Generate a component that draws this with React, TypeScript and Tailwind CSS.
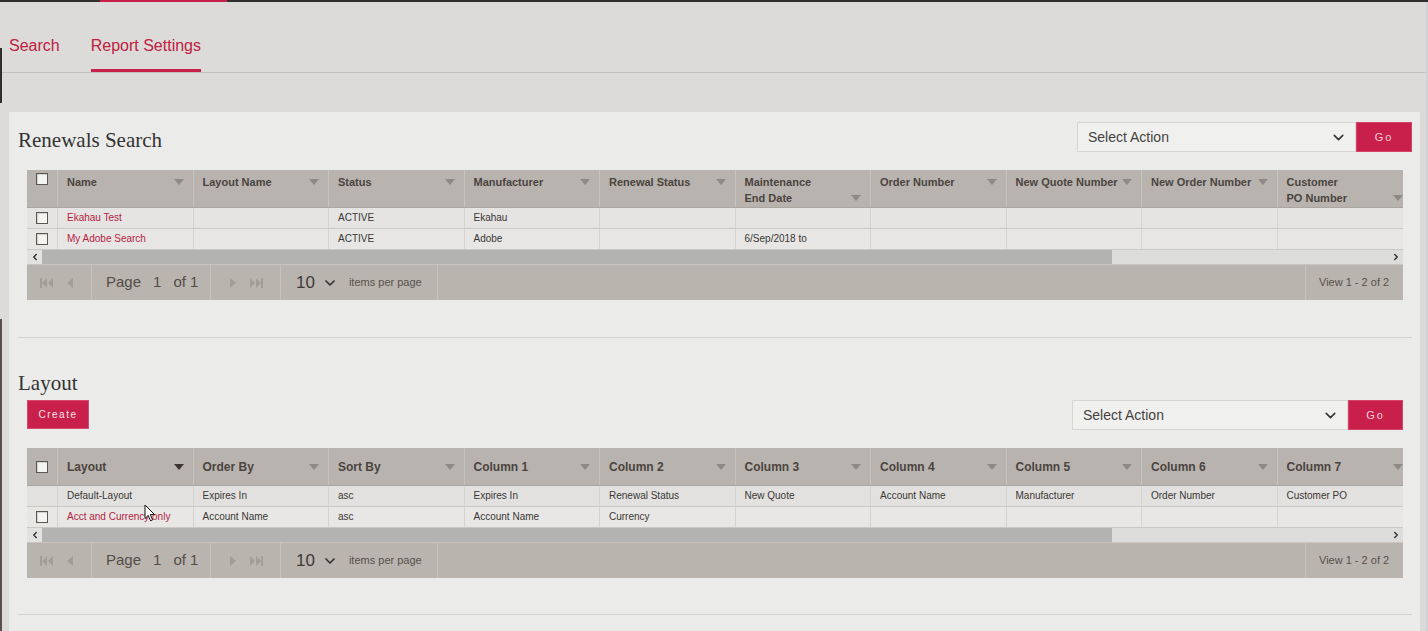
import React from "react";
import { ChevronDown, ChevronLeft, ChevronRight } from "lucide-react";

type Col = { label: string[]; dark?: boolean };

const t1Cols: Col[] = [
  { label: ["Name"] },
  { label: ["Layout Name"] },
  { label: ["Status"] },
  { label: ["Manufacturer"] },
  { label: ["Renewal Status"] },
  { label: ["Maintenance", "End Date"] },
  { label: ["Order Number"] },
  { label: ["New Quote Number"] },
  { label: ["New Order Number"] },
  { label: ["Customer", "PO Number"] },
];

type Row = { check: boolean; link: boolean; cells: string[]; bg: string; cursor?: boolean };

const t1Rows: Row[] = [
  { check: true, link: true, bg: "bg-[#e5e4e2]", cells: ["Ekahau Test", "", "ACTIVE", "Ekahau", "", "", "", "", "", ""] },
  { check: true, link: true, bg: "bg-[#e7e6e4]", cells: ["My Adobe Search", "", "ACTIVE", "Adobe", "", "6/Sep/2018 to", "", "", "", ""] },
];

const t2Cols: Col[] = [
  { label: ["Layout"], dark: true },
  { label: ["Order By"] },
  { label: ["Sort By"] },
  { label: ["Column 1"] },
  { label: ["Column 2"] },
  { label: ["Column 3"] },
  { label: ["Column 4"] },
  { label: ["Column 5"] },
  { label: ["Column 6"] },
  { label: ["Column 7"] },
];

const t2Rows: Row[] = [
  {
    check: false,
    link: false,
    bg: "bg-[#e2e1df]",
    cells: ["Default-Layout", "Expires In", "asc", "Expires In", "Renewal Status", "New Quote", "Account Name", "Manufacturer", "Order Number", "Customer PO"],
  },
  {
    check: true,
    link: true,
    cursor: true,
    bg: "bg-[#e8e7e5]",
    cells: ["Acct and Currency only", "Account Name", "asc", "Account Name", "Currency", "", "", "", "", ""],
  },
];

function Tri({ dark, center }: { dark?: boolean; center?: boolean }) {
  return (
    <svg width="10" height="6" viewBox="0 0 10 6" className={`shrink-0 ${center ? "" : "mb-[5px]"}`}>
      <path d="M0 0H10L5 6Z" fill={dark ? "#3b3431" : "#8e8984"} />
    </svg>
  );
}

function Check() {
  return <div className="w-[12px] h-[12px] bg-[#f4f4f3] border border-[#5b5753] shadow-[inset_1px_1px_1px_rgba(0,0,0,0.15)]" />;
}

function Cursor() {
  return (
    <svg width="12" height="18" viewBox="0 0 12 18" className="absolute left-[86px] top-[-3px] z-10">
      <path d="M1 1 L1 14.5 L4.2 11.4 L6.6 16.8 L8.6 15.9 L6.3 10.6 L10.6 10.6 Z" fill="#ffffff" stroke="#111111" strokeWidth="1" strokeLinejoin="round" />
    </svg>
  );
}

function FirstIcon() {
  return (
    <svg width="13" height="10" viewBox="0 0 13 10">
      <rect x="0" y="0" width="2" height="10" fill="#a29d97" />
      <path d="M7 0V10L2 5Z" fill="#a29d97" />
      <path d="M13 0V10L8 5Z" fill="#a29d97" />
    </svg>
  );
}
function LastIcon() {
  return (
    <svg width="13" height="10" viewBox="0 0 13 10">
      <path d="M0 0V10L5 5Z" fill="#a29d97" />
      <path d="M6 0V10L11 5Z" fill="#a29d97" />
      <rect x="11" y="0" width="2" height="10" fill="#a29d97" />
    </svg>
  );
}
function PrevIcon() {
  return (
    <svg width="6" height="10" viewBox="0 0 6 10">
      <path d="M6 0V10L0 5Z" fill="#a29d97" />
    </svg>
  );
}
function NextIcon() {
  return (
    <svg width="6" height="10" viewBox="0 0 6 10">
      <path d="M0 0V10L6 5Z" fill="#a29d97" />
    </svg>
  );
}

function Grid({ cols, rows, center }: { cols: Col[]; rows: Row[]; center?: boolean }) {
  return (
    <div className="w-[1376px] overflow-hidden">
      <div className="flex h-[38px] bg-[#b8b3ae] border-b border-[#aaa59f]">
        <div className={`w-[31px] shrink-0 border-r border-[#c6c2bd] flex justify-center ${center ? "items-center" : "pt-[3px]"}`}>
          <Check />
        </div>
        {cols.map((c, i) => (
          <div
            key={i}
            className={`w-[135.5px] shrink-0 border-r border-[#c6c2bd] pl-[9px] pr-[9px] ${center ? "flex flex-col justify-center" : "pt-[4px]"}`}
          >
            <div className={`flex justify-between ${center ? "items-center" : "items-end"}`}>
              <div className={`${center ? "text-[12px]" : "text-[11px]"} leading-[16px] font-bold text-[#4b443f] whitespace-nowrap`}>
                {c.label.map((l, j) => (
                  <div key={j}>{l}</div>
                ))}
              </div>
              <Tri dark={c.dark} center={center} />
            </div>
          </div>
        ))}
      </div>
      {rows.map((r, ri) => (
        <div key={ri} className={`flex h-[21px] border-b border-[#cac9c6] ${r.bg}`}>
          <div className="w-[31px] shrink-0 border-r border-[#d4d3d0] flex items-center justify-center">
            {r.check ? <Check /> : null}
          </div>
          {r.cells.map((c, ci) => (
            <div
              key={ci}
              className={`relative w-[135.5px] shrink-0 border-r border-[#d4d3d0] pl-[9px] text-[10px] leading-[20px] whitespace-nowrap ${
                ci === 0 && r.link ? "text-[#b51d43]" : "text-[#3a3734]"
              }`}
            >
              {c}
              {ci === 0 && r.cursor ? <Cursor /> : null}
            </div>
          ))}
        </div>
      ))}
      <div className="flex h-[14px] bg-[#dcdcdb]">
        <div className="w-[15px] shrink-0 flex items-center justify-center bg-[#e2e2e1]">
          <ChevronLeft size={10} strokeWidth={3.5} color="#333333" />
        </div>
        <div className="w-[1070px] shrink-0 bg-[#b3b3b2]" />
        <div className="flex-1" />
        <div className="w-[15px] shrink-0 flex items-center justify-center">
          <ChevronRight size={10} strokeWidth={3.5} color="#333333" />
        </div>
      </div>
      <div className="flex h-[36px] bg-[#b9b4ae] border-t border-[#c9c5c0]">
        <div className="w-[65px] shrink-0 border-r border-[#c6c1bb] flex items-center pl-[13px] gap-[14px]">
          <FirstIcon />
          <PrevIcon />
        </div>
        <div className="w-[119px] shrink-0 border-r border-[#c6c1bb] flex items-center pl-[14px] gap-[12px] text-[15px] text-[#534d48]">
          <span>Page</span>
          <span>1</span>
          <span>of 1</span>
        </div>
        <div className="w-[70px] shrink-0 border-r border-[#c6c1bb] flex items-center pl-[19px] gap-[14px]">
          <NextIcon />
          <LastIcon />
        </div>
        <div className="w-[157px] shrink-0 border-r border-[#c6c1bb] flex items-center pl-[15px]">
          <span className="text-[17px] text-[#3f3a36]">10</span>
          <ChevronDown size={16} strokeWidth={2.6} color="#38332f" className="ml-[7px]" />
          <span className="ml-[11px] text-[11px] text-[#57514c]">items per page</span>
        </div>
        <div className="flex-1" />
        <div className="w-[98px] shrink-0 border-l border-[#c6c1bb] flex items-center pl-[13px] text-[11px] text-[#57514c]">
          View 1 - 2 of 2
        </div>
      </div>
    </div>
  );
}

function SelectAction({ w, gw }: { w: string; gw: string }) {
  return (
    <div className="flex h-[30px]">
      <div className={`${w} h-full bg-[#f0f0ef] border border-[#d6d6d4] flex items-center justify-between pl-[10px] pr-[8px]`}>
        <span className="text-[14px] text-[#454240]">Select Action</span>
        <ChevronDown size={17} strokeWidth={2.2} color="#333333" />
      </div>
      <div className={`${gw} h-full bg-[#c8204a] border border-[#d4436a] flex items-center justify-center text-[11px] tracking-[2px] text-[#f6cdd8]`}>
        Go
      </div>
    </div>
  );
}

export default function App() {
  return (
    <div className="w-[1428px] h-[631px] overflow-hidden bg-[#dcdbd9] flex flex-col font-['Liberation_Sans',Arial,sans-serif]">
      <div className="h-[2px] shrink-0 bg-[#2f2f2f] flex">
        <div className="w-[100px]" />
        <div className="w-[127px] bg-[#c8204a]" />
      </div>
      <div className="flex flex-1 min-h-0">
        <div className="w-[2px] shrink-0 flex flex-col">
          <div className="h-[46px]" />
          <div className="h-[55px] bg-[#2e2e2e]" />
          <div className="h-[216px]" />
          <div className="flex-1 bg-[#5a504b]" />
        </div>
        <div className="flex-1 min-w-0 flex flex-col">
          <div className="h-[71px] shrink-0 border-b border-[#c2c1bf] flex items-end pl-[7px] gap-[31px]">
            <div className="pb-[14px] border-b-[3px] border-transparent text-[16px] leading-[18px] text-[#c0203f]">Search</div>
            <div className="pb-[14px] border-b-[3px] border-[#c8204a] text-[16px] leading-[18px] text-[#c0203f]">Report Settings</div>
          </div>
          <div className="h-[39px] shrink-0" />
          <div className="flex-1 ml-[7px] mr-[6px] bg-[#ebebea] pt-[10px] pl-[9px] pr-[8px]">
            <div className="flex items-end justify-between h-[30px]">
              <h2 className="font-['Liberation_Serif',serif] text-[21px] leading-[24px] text-[#333333]">Renewals Search</h2>
              <SelectAction w="w-[279px]" gw="w-[56px]" />
            </div>
            <div className="mt-[18px] px-[9px]">
              <Grid cols={t1Cols} rows={t1Rows} />
            </div>
            <div className="mt-[37px] h-px bg-[#d3d3d1]" />
            <h2 className="mt-[33px] font-['Liberation_Serif',serif] text-[21px] leading-[24px] text-[#333333]">Layout</h2>
            <div className="mt-[5px] px-[9px] flex items-start justify-between">
              <div className="w-[62px] h-[29px] bg-[#c8204a] border border-[#d84a6d] flex items-center justify-center text-[10px] tracking-[1.5px] text-[#fbe3e9]">
                Create
              </div>
              <SelectAction w="w-[276px]" gw="w-[55px]" />
            </div>
            <div className="mt-[18px] px-[9px]">
              <Grid cols={t2Cols} rows={t2Rows} center />
            </div>
            <div className="mt-[36px] h-px bg-[#d3d3d1]" />
          </div>
        </div>
        <div className="w-[2px] shrink-0 bg-[#d2d2d5]" />
      </div>
    </div>
  );
}
